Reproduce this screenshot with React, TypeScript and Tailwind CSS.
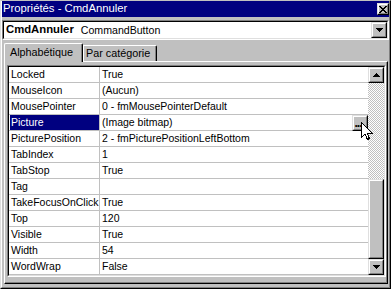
const rows: [string, string][] = [
  ["Locked", "True"],
  ["MouseIcon", "(Aucun)"],
  ["MousePointer", "0 - fmMousePointerDefault"],
  ["Picture", "(Image bitmap)"],
  ["PicturePosition", "2 - fmPicturePositionLeftBottom"],
  ["TabIndex", "1"],
  ["TabStop", "True"],
  ["Tag", ""],
  ["TakeFocusOnClick", "True"],
  ["Top", "120"],
  ["Visible", "True"],
  ["Width", "54"],
  ["WordWrap", "False"],
];

function Raised({
  className = "",
  children,
}: {
  className?: string;
  children?: React.ReactNode;
}) {
  return (
    <div
      className={`shrink-0 border border-t-[#dfdfdf] border-l-[#dfdfdf] border-r-black border-b-black ${className}`}
    >
      <div className="flex h-full w-full items-center justify-center border border-t-white border-l-white border-r-[#808080] border-b-[#808080] bg-[#c0c0c0]">
        {children}
      </div>
    </div>
  );
}

function ArrowDown() {
  return (
    <svg width="7" height="4" shapeRendering="crispEdges">
      <path d="M0 0h7v1H0zM1 1h5v1H1zM2 2h3v1H2zM3 3h1v1H3z" fill="#000" />
    </svg>
  );
}

function ArrowUp() {
  return (
    <svg width="7" height="4" shapeRendering="crispEdges">
      <path d="M3 0h1v1H3zM2 1h3v1H2zM1 2h5v1H1zM0 3h7v1H0z" fill="#000" />
    </svg>
  );
}

function CloseGlyph() {
  return (
    <svg width="8" height="7" shapeRendering="crispEdges">
      <path
        d="M0 0h2v1H0zM6 0h2v1H6zM1 1h2v1H1zM5 1h2v1H5zM2 2h4v1H2zM3 3h2v1H3zM2 4h4v1H2zM1 5h2v1H1zM5 5h2v1H5zM0 6h2v1H0zM6 6h2v1H6z"
        fill="#000"
      />
    </svg>
  );
}

export default function App() {
  return (
    <div className="relative h-[289px] w-[391px] border-t border-l border-r border-b border-t-[#c0c0c0] border-l-[#dfdfdf] border-r-black border-b-black bg-[#c0c0c0] font-['Liberation_Sans',Arial,sans-serif] text-black">
      <div className="flex h-full flex-col border-l border-r border-b border-l-white border-r-[#808080] border-b-[#808080]">
        {/* title bar */}
        <div className="flex h-[16px] items-center justify-between bg-[#000080] pl-[1px]">
          <span className="text-[11.3px] leading-none text-white">
            Propriétés - CmdAnnuler
          </span>
          <Raised className="h-[12px] w-[12px]">
            <CloseGlyph />
          </Raised>
        </div>

        {/* object combo */}
        <div className="mt-[3px] h-[20px] border border-t-[#808080] border-l-[#808080] border-r-white border-b-white">
          <div className="flex h-full items-center border border-t-black border-l-black border-r-[#dfdfdf] border-b-[#dfdfdf] bg-white">
            <span className="pl-[2px] text-[11.3px] font-bold leading-none">
              CmdAnnuler
            </span>
            <span className="ml-[7px] text-[10.6px] leading-none">
              CommandButton
            </span>
            <Raised className="ml-auto h-[16px] w-[16px]">
              <ArrowDown />
            </Raised>
          </div>
        </div>

        {/* tabs */}
        <div className="mt-[3px] flex h-[18px] items-end pl-[2px]">
          <div className="relative z-10 -mb-[1px] h-[19px] w-[79px] rounded-tl-[2px] rounded-tr-[2px] border-t border-l border-r border-t-white border-l-white border-r-black bg-[#c0c0c0]">
            <div className="flex h-full items-center border-r border-r-[#808080] pl-[5px] pb-[1px] text-[10.8px] leading-none">
              Alphabétique
            </div>
          </div>
          <div className="h-[16px] w-[74px] rounded-tr-[2px] border-t border-l border-r border-t-white border-l-white border-r-black">
            <div className="flex h-full items-center border-r border-r-[#808080] pl-[2px] text-[10.8px] leading-none">
              Par catégorie
            </div>
          </div>
        </div>

        {/* tab page */}
        <div className="ml-[2px] h-[223px] w-[384px] border-t border-l border-r border-b border-t-white border-l-white border-r-black border-b-black">
          <div className="h-full border-r border-b border-r-[#808080] border-b-[#808080] pl-[2px] pt-[3px]">
            <div className="h-[212px] w-[379px] border border-t-[#808080] border-l-[#808080] border-r-white border-b-white">
              <div className="flex h-full border border-t-black border-l-black border-r-[#dfdfdf] border-b-[#dfdfdf] bg-white">
                <div className="flex w-[359px] flex-col">
                  {rows.map(([name, value]) => {
                    const selected = name === "Picture";
                    return (
                      <div
                        key={name}
                        className="flex h-[16px] border-b border-b-[#c0c0c0] text-[10.5px] leading-none"
                      >
                        <div className="w-[91px] border-r border-r-[#c0c0c0] pl-[1px]">
                          <div
                            className={`flex h-full items-center pl-[1px] ${
                              selected ? "bg-[#000080] text-white" : ""
                            }`}
                          >
                            {name}
                          </div>
                        </div>
                        <div className="relative flex flex-1 items-center pl-[2px]">
                          {value}
                          {selected && (
                            <Raised className="absolute right-0 top-0 h-[16px] w-[16px]">
                              <span className="mr-[4px] self-end text-[12px] font-bold leading-none tracking-[-1px]">
                                ...
                              </span>
                            </Raised>
                          )}
                        </div>
                      </div>
                    );
                  })}
                </div>

                {/* scrollbar */}
                <div className="flex w-[16px] flex-col">
                  <Raised className="h-[16px] w-[16px]">
                    <ArrowUp />
                  </Raised>
                  <div className="flex-1 bg-[image:repeating-conic-gradient(#c0c0c0_0_25%,#ffffff_0_50%)] bg-[length:2px_2px]" />
                  <Raised className="h-[80px] w-[16px]" />
                  <Raised className="h-[16px] w-[16px]">
                    <ArrowDown />
                  </Raised>
                </div>
              </div>
            </div>
          </div>
        </div>
      </div>

      {/* mouse pointer */}
      <svg
        className="absolute left-[360px] top-[121px]"
        width="12"
        height="19"
        shapeRendering="crispEdges"
      >
        <polygon
          points="0.5,0.5 0.5,15.5 4,12 6.5,17.5 8.5,16.5 6,11 11,11"
          fill="#fff"
          stroke="#000"
          strokeWidth="1"
        />
      </svg>
    </div>
  );
}
